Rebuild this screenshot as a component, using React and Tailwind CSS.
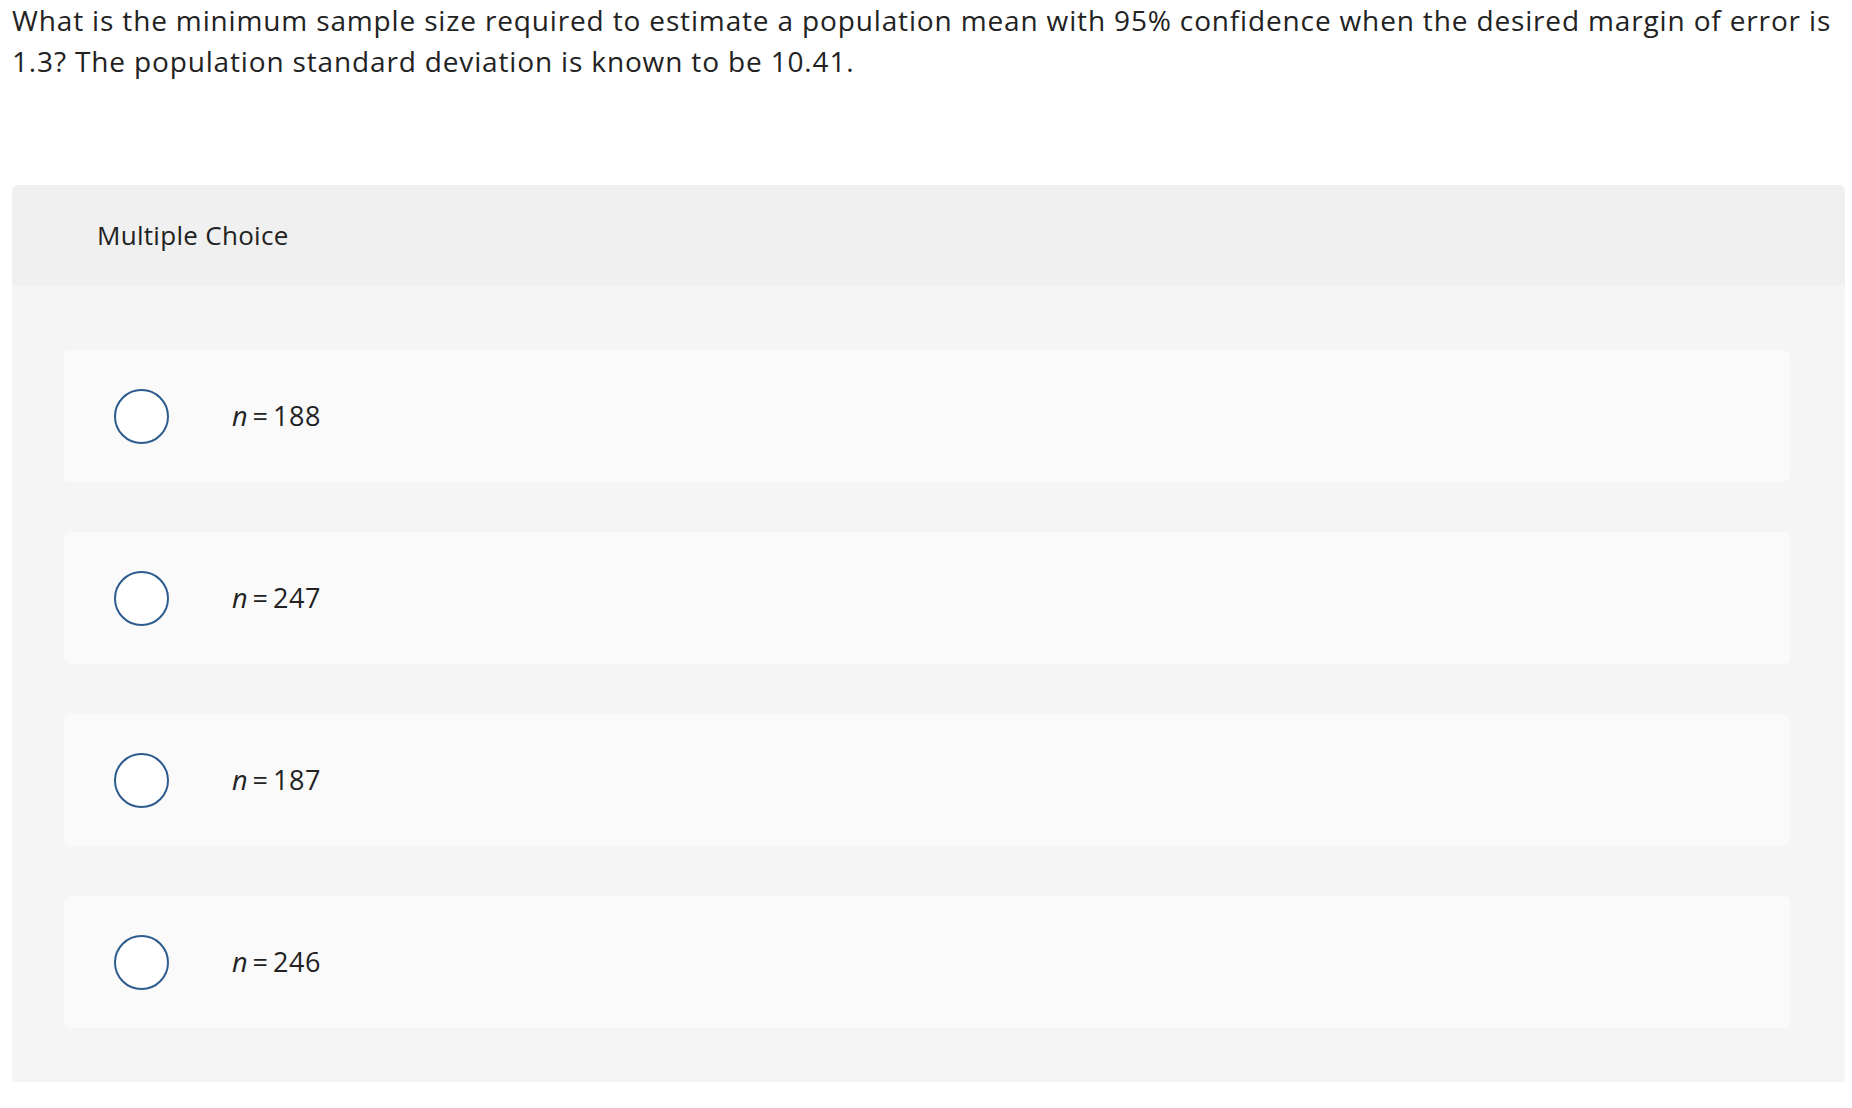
import React from 'react';

const options = ["188", "247", "187", "246"];

function Option({ value }) {
    return (
        <div className="h-[132px] bg-[#fafafa] rounded-md flex items-center">
            <span className="ml-[50px] w-[55px] h-[55px] rounded-full border-2 border-[#2d5b8e] bg-white shrink-0"></span>
            <span className="ml-[63px] text-[27px] text-[#222] flex items-baseline">
                <i>n</i>
                <span className="ml-[5px] mr-[5px]">=</span>
                <span className="tracking-[0.5px]">{value}</span>
            </span>
        </div>
    );
}

export default function App() {
    return (
        <div className="bg-white min-h-screen px-[12px] text-[#222]" style={{ fontFamily: '"Open Sans", Lato, sans-serif' }}>
            <p className="text-[28px] leading-[41px] tracking-[0.85px] m-0">
                What is the minimum sample size required to estimate a population mean with 95% confidence when the desired margin of error is<br />
                1.3? The population standard deviation is known to be 10.41.
            </p>

            <div className="mt-[103px] w-[1833px] rounded-t-md overflow-hidden bg-[#f5f5f5]">
                <div className="h-[101px] bg-[#f0f0f0] flex items-center pl-[85px]">
                    <span className="text-[26px] tracking-[0.3px] text-[#222]">Multiple Choice</span>
                </div>
                <div className="pt-[64px] pb-[54px] pl-[52px] pr-[55px] flex flex-col gap-[50px]">
                    {options.map((o) => (
                        <Option key={o} value={o} />
                    ))}
                </div>
            </div>
        </div>
    );
}
